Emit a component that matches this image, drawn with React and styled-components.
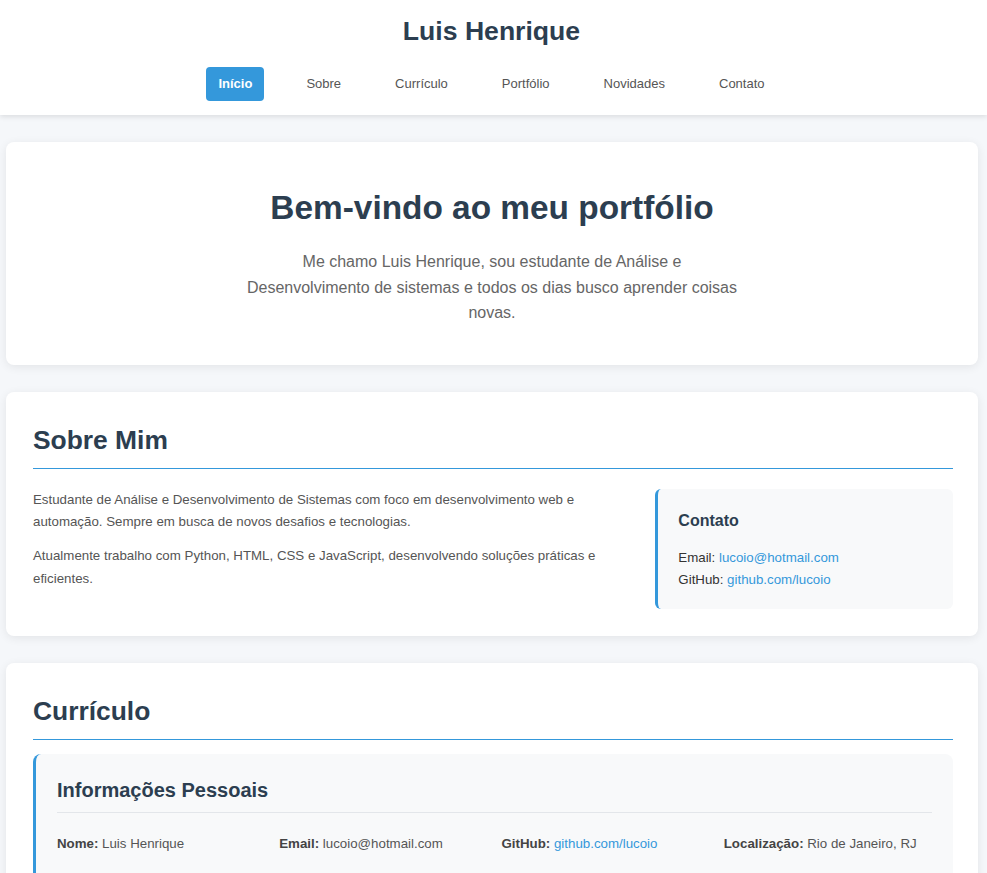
import React from "react";
import styled, { createGlobalStyle } from "styled-components";

const GlobalStyle = createGlobalStyle`
  * {
    box-sizing: border-box;
  }
  body {
    margin: 0;
    background: #f5f7fa;
    font-family: "Liberation Sans", Arial, sans-serif;
    color: #333;
  }
  h1, h2, h3, p {
    margin: 0;
  }
`;

const navItems = ["Início", "Sobre", "Currículo", "Portfólio", "Novidades", "Contato"];

const personal = [
  { label: "Nome:", value: "Luis Henrique" },
  { label: "Email:", value: "lucoio@hotmail.com" },
  { label: "GitHub:", value: "github.com/lucoio", link: true },
  { label: "Localização:", value: "Rio de Janeiro, RJ" },
];

function App() {
  return (
    <>
      <GlobalStyle />
      <Header>
        <SiteTitle>Luis Henrique</SiteTitle>
        <Nav>
          {navItems.map((item, i) => (
            <NavLink key={item} $active={i === 0}>
              {item}
            </NavLink>
          ))}
        </Nav>
      </Header>

      <Main>
        <Hero>
          <HeroTitle>Bem-vindo ao meu portfólio</HeroTitle>
          <HeroText>
            Me chamo Luis Henrique, sou estudante de Análise e Desenvolvimento de sistemas e
            todos os dias busco aprender coisas novas.
          </HeroText>
        </Hero>

        <Card>
          <SectionTitle $space={20}>Sobre Mim</SectionTitle>
          <AboutGrid>
            <div>
              <Paragraph>
                Estudante de Análise e Desenvolvimento de Sistemas com foco em desenvolvimento
                web e automação. Sempre em busca de novos desafios e tecnologias.
              </Paragraph>
              <Paragraph>
                Atualmente trabalho com Python, HTML, CSS e JavaScript, desenvolvendo soluções
                práticas e eficientes.
              </Paragraph>
            </div>
            <ContactBox>
              <ContactTitle>Contato</ContactTitle>
              <ContactLine>
                Email: <Link>lucoio@hotmail.com</Link>
              </ContactLine>
              <ContactLine>
                GitHub: <Link>github.com/lucoio</Link>
              </ContactLine>
            </ContactBox>
          </AboutGrid>
        </Card>

        <Card>
          <SectionTitle $space={14}>Currículo</SectionTitle>
          <InfoBlock>
            <InfoTitle>Informações Pessoais</InfoTitle>
            <InfoGrid>
              {personal.map((p) => (
                <InfoItem key={p.label}>
                  <strong>{p.label}</strong>{" "}
                  {p.link ? <Link>{p.value}</Link> : p.value}
                </InfoItem>
              ))}
            </InfoGrid>
          </InfoBlock>
        </Card>
      </Main>
    </>
  );
}

export default App;

const Header = styled.header`
  background: #fff;
  box-shadow: 0 2px 5px rgba(0, 0, 0, 0.1);
  padding: 16px 4px 14px 0;
  display: flex;
  flex-direction: column;
  align-items: center;
`;

const SiteTitle = styled.h1`
  font-size: 26.6px;
  line-height: 30px;
  font-weight: 700;
  color: #2c3e50;
`;

const Nav = styled.nav`
  display: flex;
  gap: 30px;
  margin-top: 21px;
`;

const NavLink = styled.a`
  display: block;
  padding: 9px 12px;
  font-size: 13px;
  line-height: 16px;
  border-radius: 4px;
  color: ${(p) => (p.$active ? "#fff" : "#555")};
  background: ${(p) => (p.$active ? "#3498db" : "transparent")};
  font-weight: ${(p) => (p.$active ? 700 : 400)};
  cursor: pointer;
`;

const Main = styled.main`
  display: flex;
  flex-direction: column;
  gap: 27px;
  padding: 27px 9px 40px 6px;
`;

const Card = styled.section`
  background: #fff;
  border-radius: 8px;
  box-shadow: 0 2px 10px rgba(0, 0, 0, 0.08);
  padding: 33px 25px 27px 27px;
`;

const Hero = styled(Card)`
  text-align: center;
  padding: 47px 40px 39px;
`;

const HeroTitle = styled.h1`
  font-size: 33.4px;
  line-height: 38px;
  font-weight: 700;
  color: #2c3e50;
  margin-bottom: 22px;
`;

const HeroText = styled.p`
  max-width: 500px;
  margin: 0 auto;
  font-size: 16px;
  line-height: 25.6px;
  color: #666;
`;

const SectionTitle = styled.h2`
  font-size: 26.4px;
  line-height: 30px;
  font-weight: 700;
  color: #2c3e50;
  padding-bottom: 13px;
  border-bottom: 1px solid #3498db;
  margin-bottom: ${(p) => p.$space}px;
`;

const AboutGrid = styled.div`
  display: grid;
  grid-template-columns: 2fr 1fr;
  gap: 27px;
  align-items: start;
`;

const Paragraph = styled.p`
  font-size: 13.3px;
  line-height: 22.5px;
  color: #555;
  margin-bottom: 11.5px;
`;

const ContactBox = styled.div`
  background: #f8f9fa;
  border-left: 3px solid #3498db;
  border-radius: 6px;
  padding: 22px 20px 18px;
`;

const ContactTitle = styled.h3`
  font-size: 16px;
  line-height: 19px;
  font-weight: 700;
  color: #2c3e50;
  margin-bottom: 17px;
`;

const ContactLine = styled.p`
  font-size: 13.3px;
  line-height: 22px;
  color: #333;
`;

const Link = styled.a`
  color: #3498db;
  text-decoration: none;
  cursor: pointer;
`;

const InfoBlock = styled.div`
  background: #f8f9fa;
  border-left: 3px solid #3498db;
  border-radius: 8px;
  padding: 25px 21px 30px;
`;

const InfoTitle = styled.h3`
  font-size: 20px;
  line-height: 23px;
  font-weight: 700;
  color: #2c3e50;
  padding-bottom: 10px;
  border-bottom: 1px solid #e3e6ea;
  margin-bottom: 22px;
`;

const InfoGrid = styled.div`
  display: grid;
  grid-template-columns: repeat(4, 1fr);
  gap: 14px;
`;

const InfoItem = styled.p`
  font-size: 13.3px;
  line-height: 18px;
  color: #555;

  strong {
    color: #444;
  }
`;
